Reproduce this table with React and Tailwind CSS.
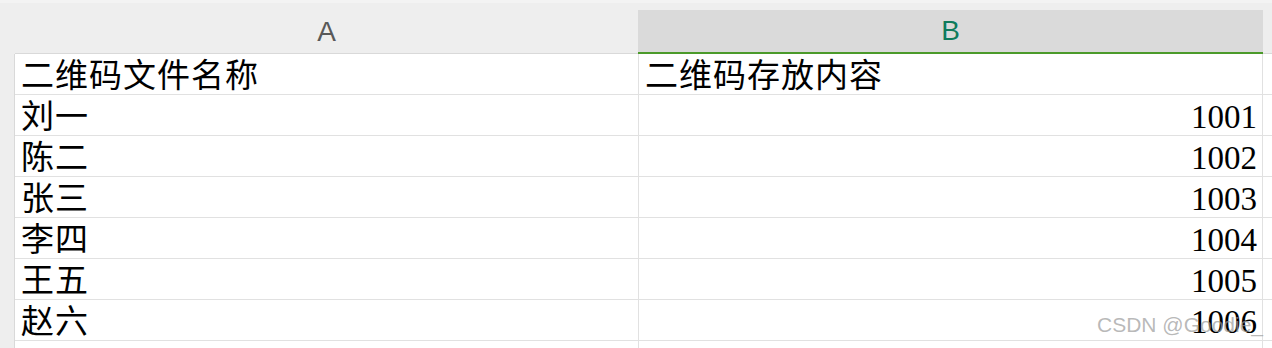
import React from 'react';

const rows = [
  { name: '二维码文件名称', value: '二维码存放内容', header: true },
  { name: '刘一', value: '1001' },
  { name: '陈二', value: '1002' },
  { name: '张三', value: '1003' },
  { name: '李四', value: '1004' },
  { name: '王五', value: '1005' },
  { name: '赵六', value: '1006' },
  { name: '', value: '' },
];

const cellFont = { fontFamily: '"Liberation Serif", "Noto Sans CJK SC", serif' };

const App = () => {
  return (
    <div className="relative w-[1272px] h-[348px] overflow-hidden bg-[#eeeeee]">
      {/* top strip */}
      <div className="h-[3px] bg-[#f3f3f3]" />
      <div className="h-[7px]" />

      {/* column headers */}
      <div className="flex h-[44px]">
        <div className="w-[15px] shrink-0" />
        <div
          className="w-[623px] shrink-0 flex items-center justify-center border-b border-[#d9d9d9] text-[28px] text-[#595959]"
          style={{ fontFamily: '"Liberation Sans", sans-serif' }}
        >
          A
        </div>
        <div
          className="w-[625px] shrink-0 flex items-center justify-center bg-[#dadada] border-b-2 border-[#4b9a2a] text-[28px] text-[#0f7b5c]"
          style={{ fontFamily: '"Liberation Sans", sans-serif' }}
        >
          B
        </div>
        <div className="flex-1 border-b border-[#d9d9d9]" />
      </div>

      {/* rows */}
      {rows.map((row, i) => (
        <div key={i} className="flex h-[41px]">
          <div className="w-[15px] shrink-0 border-r border-[#d9d9d9]" />
          <div
            className="w-[624px] shrink-0 bg-white border-r border-b border-[#e1e1e1] flex items-center pt-[6px] pl-[6px] text-[33px] text-black tracking-[1px] whitespace-nowrap"
            style={cellFont}
          >
            {row.name}
          </div>
          <div
            className={`w-[624px] shrink-0 bg-white border-r border-b border-[#e1e1e1] flex items-center pt-[6px] text-[33px] text-black whitespace-nowrap ${
              row.header ? 'justify-start pl-[6px] tracking-[1px]' : 'justify-end pr-[5px]'
            }`}
            style={cellFont}
          >
            {row.value}
          </div>
          <div className="flex-1 bg-white border-b border-[#e1e1e1]" />
        </div>
      ))}

      {/* watermark */}
      <div
        className="absolute left-[1097px] top-[309px] text-[21px] text-[#9a9a9a]/70 whitespace-nowrap"
        style={{ fontFamily: '"Liberation Sans", sans-serif' }}
      >
        CSDN @Goodie_
      </div>
    </div>
  );
};

export default App;
